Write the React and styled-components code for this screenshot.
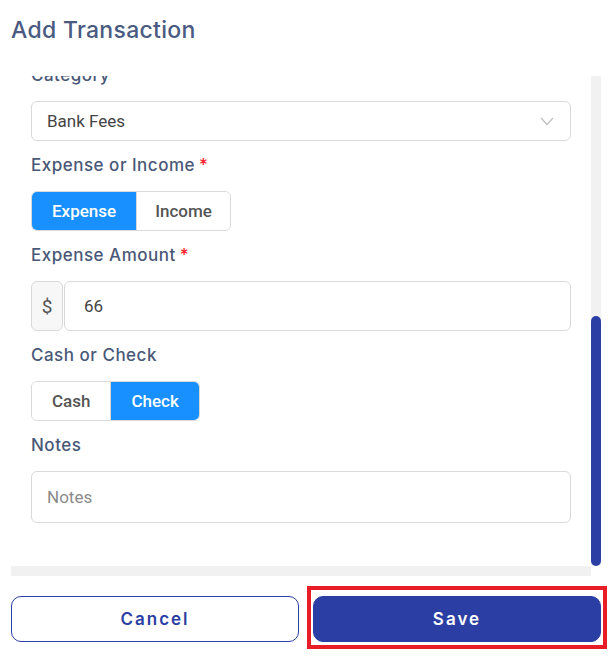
import React, { useLayoutEffect, useRef } from 'react';
import styled, { createGlobalStyle } from 'styled-components';

const GlobalStyle = createGlobalStyle`
  html, body {
    margin: 0;
    padding: 0;
    background: #ffffff;
  }
  * {
    box-sizing: border-box;
  }
`;

const Modal = styled.div`
  width: 615px;
  height: 659px;
  background: #ffffff;
  font-family: 'Roboto', 'Liberation Sans', sans-serif;
`;

const Header = styled.div`
  height: 76px;
  padding: 15px 11px 0;
`;

const Title = styled.h2`
  margin: 0;
  font-family: 'Inter', 'Liberation Sans', sans-serif;
  font-size: 23px;
  line-height: 30px;
  font-weight: 500;
  color: #4a5a80;
  letter-spacing: 0.3px;
`;

// scroll frame with a drawn scrollbar (headless chrome hides native ones)
const ScrollFrame = styled.div`
  margin-left: 11px;
  display: grid;
  grid-template-columns: 580px 10px;
  grid-template-rows: 490px 10px;
`;

const Viewport = styled.div`
  overflow: hidden;
`;

const VTrack = styled.div`
  background: #f1f1f1;
  display: flex;
  flex-direction: column;
  justify-content: flex-end;
`;

const Thumb = styled.div`
  height: 250px;
  background: #2b3ea3;
  border-radius: 5px;
`;

const HTrack = styled.div`
  background: #f1f1f1;
`;

const Corner = styled.div`
  background: #ffffff;
`;

const Form = styled.div`
  padding: 6px 20px 43px;
`;

const Field = styled.div`
  margin-bottom: 12px;

  &:last-child {
    margin-bottom: 0;
  }
`;

const Label = styled.div`
  font-family: 'Inter', 'Liberation Sans', sans-serif;
  font-size: 17px;
  line-height: 24px;
  font-weight: 500;
  color: #4a5878;
  letter-spacing: 0.5px;
  margin-bottom: 14px;
`;

const Required = styled.span`
  color: #f5222d;
  margin-left: 4px;
`;

const Box = styled.div`
  display: flex;
  align-items: center;
  height: ${p => p.$h || 40}px;
  padding: 0 15px;
  border: 1px solid #d9d9d9;
  border-radius: 6px;
  background: #ffffff;
  font-size: 17px;
  color: ${p => (p.$placeholder ? '#8a8a8a' : '#444444')};
`;

const SelectBox = styled(Box)`
  justify-content: space-between;
  padding-right: 16px;
`;

const Toggle = styled.div`
  display: inline-flex;
  border: 1px solid #d9d9d9;
  border-radius: 6px;
  overflow: hidden;
`;

const ToggleOption = styled.div`
  height: 38px;
  padding: 0 ${p => p.$pad || 20}px;
  display: flex;
  align-items: center;
  font-size: 17px;
  font-weight: 500;
  background: ${p => (p.$active ? '#1890ff' : '#ffffff')};
  color: ${p => (p.$active ? '#ffffff' : '#555555')};
  & + & {
    border-left: 1px solid #d9d9d9;
  }
`;

const AmountRow = styled.div`
  display: flex;
  gap: 1px;
  height: 50px;
`;

const Prefix = styled.div`
  width: 32px;
  display: flex;
  align-items: center;
  justify-content: center;
  border: 1px solid #d9d9d9;
  border-radius: 6px;
  background: #f7f7f7;
  font-size: 19px;
  color: #555555;
`;

const AmountInput = styled(Box)`
  flex: 1;
  height: 50px;
  padding-left: 19px;
`;

const Footer = styled.div`
  display: grid;
  grid-template-columns: 288px 288px;
  gap: 14px;
  padding: 20px 0 0 11px;
`;

const Button = styled.button`
  height: 46px;
  border-radius: 10px;
  border: 1px solid #2b3ea3;
  background: ${p => (p.$primary ? '#2b3ea3' : '#ffffff')};
  color: ${p => (p.$primary ? '#ffffff' : '#2b3ea3')};
  font-family: 'Inter', 'Liberation Sans', sans-serif;
  font-size: 17px;
  font-weight: 600;
  letter-spacing: 2px;
  cursor: pointer;
`;

const HighlightWrap = styled.div`
  position: relative;
  display: flex;
  flex-direction: column;

  &::after {
    content: '';
    position: absolute;
    left: -6px;
    right: -6px;
    top: -10px;
    bottom: -7px;
    border: 4px solid #e81d25;
    pointer-events: none;
  }
`;

const Chevron = () => (
  <svg width="14" height="9" viewBox="0 0 14 9">
    <polyline points="1,1 7,7.5 13,1" fill="none" stroke="#bfbfbf" strokeWidth="1.2" />
  </svg>
);

const hiddenFields = ['Date', 'Payee', 'Account', 'Description', 'Reference'];

export default function App() {
  const scrollRef = useRef(null);

  useLayoutEffect(() => {
    if (scrollRef.current) {
      scrollRef.current.scrollTop = scrollRef.current.scrollHeight;
    }
  }, []);

  return (
    <>
      <GlobalStyle />
      <Modal>
        <Header>
          <Title>Add Transaction</Title>
        </Header>
        <ScrollFrame>
          <Viewport ref={scrollRef}>
            <Form>
              {hiddenFields.map(name => (
                <Field key={name}>
                  <Label>{name}</Label>
                  <Box $placeholder>{name}</Box>
                </Field>
              ))}
              <Field>
                <Label>Category</Label>
                <SelectBox>
                  Bank Fees
                  <Chevron />
                </SelectBox>
              </Field>
              <Field>
                <Label>
                  Expense or Income<Required>*</Required>
                </Label>
                <Toggle>
                  <ToggleOption $active $pad={20}>Expense</ToggleOption>
                  <ToggleOption $pad={18}>Income</ToggleOption>
                </Toggle>
              </Field>
              <Field>
                <Label>
                  Expense Amount<Required>*</Required>
                </Label>
                <AmountRow>
                  <Prefix>$</Prefix>
                  <AmountInput>66</AmountInput>
                </AmountRow>
              </Field>
              <Field>
                <Label>Cash or Check</Label>
                <Toggle>
                  <ToggleOption $pad={20}>Cash</ToggleOption>
                  <ToggleOption $active $pad={20}>Check</ToggleOption>
                </Toggle>
              </Field>
              <Field>
                <Label>Notes</Label>
                <Box $h={52} $placeholder>Notes</Box>
              </Field>
            </Form>
          </Viewport>
          <VTrack>
            <Thumb />
          </VTrack>
          <HTrack />
          <Corner />
        </ScrollFrame>
        <Footer>
          <Button>Cancel</Button>
          <HighlightWrap>
            <Button $primary>Save</Button>
          </HighlightWrap>
        </Footer>
      </Modal>
    </>
  );
}
